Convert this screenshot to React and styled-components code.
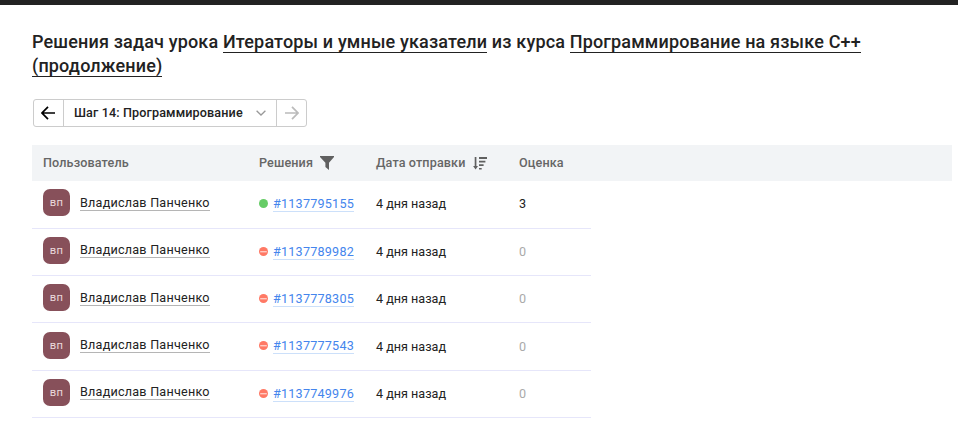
import React from "react";
import styled, { createGlobalStyle } from "styled-components";

const Global = createGlobalStyle`
  * { box-sizing: border-box; }
  body { margin: 0; background: #fff; color: #222; font: 12.6px/18px Roboto, sans-serif; letter-spacing: 0.225px; overflow: hidden; }
`;
const TopBar = styled.div`height: 5px; background: #222;`;
const Page = styled.main`padding: 25px 6px 0 32px;`;
const Title = styled.h1`
  margin: 0; width: 860px; font-size: 18px; line-height: 24px; font-weight: 500; letter-spacing: 0.16px;
`;
const TitleLink = styled.a`
  background: linear-gradient(#222, #222) 0 100% / 100% 1px no-repeat;
  padding-bottom: 1px;
  box-decoration-break: clone;
  -webkit-box-decoration-break: clone;
`;
const Stepper = styled.nav`
  display: flex; width: 274px; height: 28px; margin: 21px 0 18px 1px;
  border: 1px solid #ccc; border-radius: 3px; color: #222;
`;
const StepButton = styled.button`
  display: flex; align-items: center; justify-content: center; width: 29px;
  padding: ${(p) => (p.disabled ? "0 0 0 1px" : "0 1px 0 0")};
  border: 0; background: none; color: ${(p) => (p.disabled ? "#bbb" : "#000")};
`;
const StepSelect = styled.div`
  display: flex; flex: 1; align-items: center; justify-content: space-between; letter-spacing: 0.13px;
  padding: 0 10px; border: solid #ccc; border-width: 0 1px; font-weight: 500; white-space: nowrap;
`;
const columns = "216px 117px 143px 83px";
const Head = styled.div`
  display: grid; grid-template-columns: ${columns}; height: 36.2px; align-items: center;
  background: #f2f4f6; color: #666; font-weight: 500; letter-spacing: 0.13px;
`;
const HeadCell = styled.div`
  display: flex; align-items: center; gap: 7.4px; padding-left: 11px; white-space: nowrap;
`;
const Row = styled.div`
  display: grid; grid-template-columns: ${columns}; width: 559px; height: 47.4px;
  border-bottom: 1px solid #e6e6fa;
`;
const UserCell = styled.div`display: flex; gap: 10px; padding: 8.2px 0 0 11px;`;
const Avatar = styled.span`
  display: flex; align-items: center; justify-content: center; width: 27px; height: 27px; padding-top: 1px;
  border-radius: 7px; background: #87505a; color: #ead9dc; font-size: 11.2px; line-height: 12px;
`;
const UserName = styled.a`
  height: 17px; margin-top: 4.4px; line-height: 17px; border-bottom: 1px solid #b5b5b5; white-space: nowrap;
`;
const Cell = styled.div`
  display: flex; align-items: flex-start; padding: 14px 0 0 11px; white-space: nowrap;
`;
const TextCell = styled(Cell)`
  padding-top: 14.2px; letter-spacing: 0;
  color: ${(p) => (p.$muted ? "#aaa" : "#222")};
`;
const Status = styled.svg`width: 9px; height: 9px; margin: 4px 5px 0 0;`;
const Solution = styled.a`
  height: 17px; line-height: 17px; color: #4485ed; border-bottom: 1px solid #cce0fa;
`;

const ArrowIcon = ({ right }) => (
  <svg width="14" height="14" viewBox="0 0 14 14" fill="none" stroke="currentColor" strokeWidth="1.7">
    <path d={right ? "M0 7h13M7 .8 13 7 7 13.2" : "M14 7H1M7 .8 1 7l6 6.2"} />
  </svg>
);
const ChevronIcon = () => (
  <svg width="10" height="6" viewBox="0 0 10 6" fill="none" stroke="#999" strokeWidth="1.3">
    <path d="M.6.7 5 5 9.4.7" />
  </svg>
);
const FilterIcon = () => (
  <svg width="14" height="14" viewBox="0 0 14 14" fill="#606060">
    <path d="M0 0h14v1L9 6.8V14L5.4 11V6.8L0 1Z" />
  </svg>
);
const SortIcon = () => (
  <svg width="14" height="13" viewBox="0 0 14 13" fill="#606060">
    <path d="M1.7 0h1.7v9H5L2.6 12.5.1 9h1.6ZM6 0h8v2H6zM6 3.7h6.4v1.8H6zM6 7.3h4.6v1.8H6zM6 11h2.7v1.6H6z" />
  </svg>
);
const StatusIcon = ({ ok }) => (
  <Status viewBox="0 0 9 9">
    <circle cx="4.5" cy="4.5" r="4.5" fill={ok ? "#66cc66" : "#ff7965"} />
    {!ok && <path d="M1.2 4h6.6v1.4H1.2z" fill="#ffcbc2" />}
  </Status>
);

const solutions = [
  { id: "#1137795155", score: 3 },
  { id: "#1137789982", score: 0 },
  { id: "#1137778305", score: 0 },
  { id: "#1137777543", score: 0 },
  { id: "#1137749976", score: 0 },
];

export default function App() {
  return (
    <>
      <Global />
      <TopBar />
      <Page>
        <Title>
          Решения задач урока <TitleLink>Итераторы и умные указатели</TitleLink> из курса{" "}
          <TitleLink>Программирование на языке C++ (продолжение)</TitleLink>
        </Title>
        <Stepper>
          <StepButton aria-label="Назад"><ArrowIcon /></StepButton>
          <StepSelect>Шаг 14: Программирование<ChevronIcon /></StepSelect>
          <StepButton aria-label="Вперёд" disabled><ArrowIcon right /></StepButton>
        </Stepper>
        <Head>
          <HeadCell>Пользователь</HeadCell>
          <HeadCell>Решения<FilterIcon /></HeadCell>
          <HeadCell>Дата отправки<SortIcon /></HeadCell>
          <HeadCell>Оценка</HeadCell>
        </Head>
        {solutions.map(({ id, score }) => (
          <Row key={id}>
            <UserCell><Avatar>вп</Avatar><UserName>Владислав Панченко</UserName></UserCell>
            <Cell><StatusIcon ok={score > 0} /><Solution>{id}</Solution></Cell>
            <TextCell>4 дня назад</TextCell>
            <TextCell $muted={score === 0}>{score}</TextCell>
          </Row>
        ))}
      </Page>
    </>
  );
}
